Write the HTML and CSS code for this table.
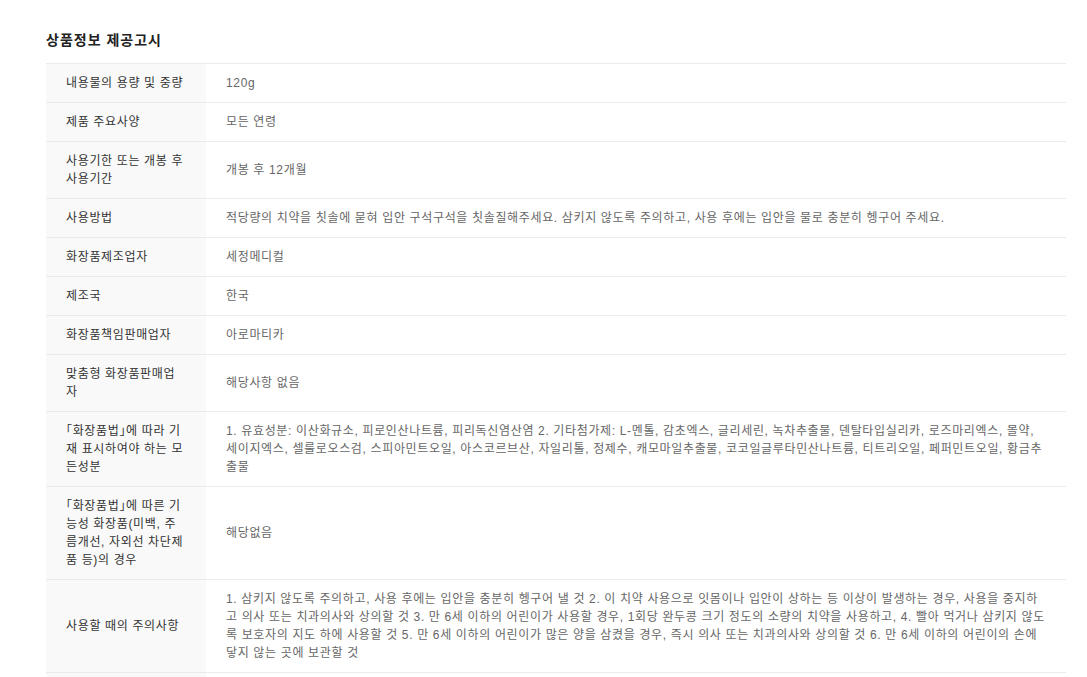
FILE: index.html
```html
<!DOCTYPE html>
<html lang="ko">
<head>
<meta charset="utf-8">
<title>상품정보 제공고시</title>
<link rel="stylesheet" href="styles.css">
</head>
<body>
<section class="notice">
  <h2 class="notice-title">상품정보 제공고시</h2>
  <table class="info-table">
    <tbody>
      <tr><th>내용물의 용량 및 중량</th><td>120g</td></tr>
      <tr><th>제품 주요사양</th><td>모든 연령</td></tr>
      <tr><th>사용기한 또는 개봉 후 사용기간</th><td>개봉 후 12개월</td></tr>
      <tr><th>사용방법</th><td>적당량의 치약을 칫솔에 묻혀 입안 구석구석을 칫솔질해주세요. 삼키지 않도록 주의하고, 사용 후에는 입안을 물로 충분히 헹구어 주세요.</td></tr>
      <tr><th>화장품제조업자</th><td>세정메디컬</td></tr>
      <tr><th>제조국</th><td>한국</td></tr>
      <tr><th>화장품책임판매업자</th><td>아로마티카</td></tr>
      <tr><th>맞춤형 화장품판매업자</th><td>해당사항 없음</td></tr>
      <tr><th>「화장품법」에 따라 기재 표시하여야 하는 모든성분</th><td>1. 유효성분: 이산화규소, 피로인산나트륨, 피리독신염산염 2. 기타첨가제: L-멘톨, 감초엑스, 글리세린, 녹차추출물, 덴탈타입실리카, 로즈마리엑스, 몰약, 세이지엑스, 셀룰로오스검, 스피아민트오일, 아스코르브산, 자일리톨, 정제수, 캐모마일추출물, 코코일글루타민산나트륨, 티트리오일, 페퍼민트오일, 황금추출물</td></tr>
      <tr><th>「화장품법」에 따른 기능성 화장품(미백, 주름개선, 자외선 차단제품 등)의 경우</th><td>해당없음</td></tr>
      <tr><th>사용할 때의 주의사항</th><td>1. 삼키지 않도록 주의하고, 사용 후에는 입안을 충분히 헹구어 낼 것 2. 이 치약 사용으로 잇몸이나 입안이 상하는 등 이상이 발생하는 경우, 사용을 중지하고 의사 또는 치과의사와 상의할 것 3. 만 6세 이하의 어린이가 사용할 경우, 1회당 완두콩 크기 정도의 소량의 치약을 사용하고, 4. 빨아 먹거나 삼키지 않도록 보호자의 지도 하에 사용할 것 5. 만 6세 이하의 어린이가 많은 양을 삼켰을 경우, 즉시 의사 또는 치과의사와 상의할 것 6. 만 6세 이하의 어린이의 손에 닿지 않는 곳에 보관할 것</td></tr>
      <tr class="row-next"><th></th><td></td></tr>
    </tbody>
  </table>
</section>
</body>
</html>
```

FILE: styles.css
```css
html, body {
  margin: 0;
  padding: 0;
  background: #ffffff;
}

body {
  font-family: "Liberation Sans", "Noto Sans CJK KR", sans-serif;
  color: #333333;
}

.notice {
  width: 1020px;
  padding: 30px 0 0 46px;
}

.notice-title {
  margin: 0 0 13px 0;
  font-size: 14px;
  line-height: 20px;
  font-weight: 700;
  letter-spacing: 1px;
  color: #222222;
}

.info-table {
  width: 100%;
  border-collapse: collapse;
  table-layout: fixed;
  border-top: 1px solid #ebebeb;
}

.info-table tr {
  border-bottom: 1px solid #ebebeb;
}

.info-table th,
.info-table td {
  padding: 10px 20px;
  font-size: 12px;
  line-height: 18px;
  letter-spacing: 0.65px;
  font-feature-settings: "halt" 1;
  text-align: left;
  vertical-align: middle;
  word-break: break-all;
}

.info-table th {
  width: 120px;
  background: #f9f9f9;
  font-weight: 400;
  color: #333333;
}

.info-table td {
  color: #666666;
}

.info-table .row-next th,
.info-table .row-next td {
  height: 20px;
}
```
